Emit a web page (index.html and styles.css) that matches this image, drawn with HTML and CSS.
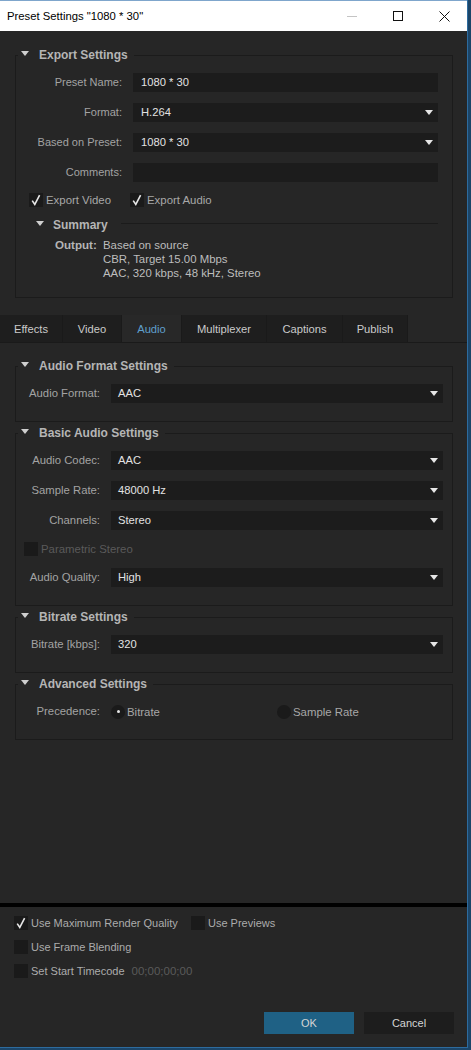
FILE: index.html
```html
<!DOCTYPE html>
<html>
<head>
<meta charset="utf-8">
<title>Preset Settings</title>
<link rel="stylesheet" href="styles.css">
</head>
<body>
<div class="window">
  <div class="titlebar">
    <span class="title">Preset Settings "1080 * 30"</span>
    <div class="wctl">
      <span class="wbtn"><svg width="10" height="10" viewBox="0 0 10 10"><line x1="0" y1="5.5" x2="10" y2="5.5" stroke="#c4c4c4" stroke-width="1"/></svg></span>
      <span class="wbtn"><svg width="10" height="10" viewBox="0 0 10 10"><rect x="0.5" y="0.5" width="9" height="9" fill="none" stroke="#111" stroke-width="1"/></svg></span>
      <span class="wbtn"><svg width="11" height="11" viewBox="0 0 11 11"><path d="M0.5 0.5 L10.5 10.5 M10.5 0.5 L0.5 10.5" stroke="#111" stroke-width="1"/></svg></span>
    </div>
  </div>

  <div class="main">
    <fieldset class="group export">
      <legend><span class="tri"></span>Export Settings</legend>
      <div class="form form-export">
        <span class="lbl">Preset Name:</span><div class="field">1080 * 30</div>
        <span class="lbl">Format:</span><div class="field drop">H.264</div>
        <span class="lbl">Based on Preset:</span><div class="field drop">1080 * 30</div>
        <span class="lbl">Comments:</span><div class="field"></div>
      </div>
      <div class="checks">
        <span class="chk chk-video"><span class="box on"><svg width="14" height="14" viewBox="0 0 14 14"><path d="M3.2 7.6 L5.8 11.4 L10.6 2.2" fill="none" stroke="#e6e6e6" stroke-width="1.6"/></svg></span>Export Video</span>
        <span class="chk"><span class="box on"><svg width="14" height="14" viewBox="0 0 14 14"><path d="M3.2 7.6 L5.8 11.4 L10.6 2.2" fill="none" stroke="#e6e6e6" stroke-width="1.6"/></svg></span>Export Audio</span>
      </div>
      <div class="summary-head"><span class="tri"></span><span class="sumtitle">Summary</span><span class="rule"></span></div>
      <div class="output">
        <span class="olabel">Output:</span>
        <div class="otext">Based on source<br>CBR, Target 15.00 Mbps<br>AAC, 320 kbps, 48 kHz, Stereo</div>
      </div>
    </fieldset>

    <div class="tabs">
      <span class="tab t-effects">Effects</span>
      <span class="tab t-video">Video</span>
      <span class="tab t-audio active">Audio</span>
      <span class="tab t-mux">Multiplexer</span>
      <span class="tab t-cap">Captions</span>
      <span class="tab t-pub">Publish</span>
    </div>

    <div class="panel">
      <fieldset class="group audio first">
        <legend><span class="tri"></span>Audio Format Settings</legend>
        <div class="form form-audio">
          <span class="lbl">Audio Format:</span><div class="field drop">AAC</div>
        </div>
      </fieldset>

      <fieldset class="group audio">
        <legend><span class="tri"></span>Basic Audio Settings</legend>
        <div class="form form-audio">
          <span class="lbl">Audio Codec:</span><div class="field drop">AAC</div>
          <span class="lbl">Sample Rate:</span><div class="field drop">48000 Hz</div>
          <span class="lbl">Channels:</span><div class="field drop">Stereo</div>
          <div class="span-row"><span class="chk disabled"><span class="box"></span>Parametric Stereo</span></div>
          <span class="lbl">Audio Quality:</span><div class="field drop">High</div>
        </div>
      </fieldset>

      <fieldset class="group audio">
        <legend><span class="tri"></span>Bitrate Settings</legend>
        <div class="form form-audio">
          <span class="lbl">Bitrate [kbps]:</span><div class="field drop">320</div>
        </div>
      </fieldset>

      <fieldset class="group audio">
        <legend><span class="tri"></span>Advanced Settings</legend>
        <div class="form form-audio">
          <span class="lbl">Precedence:</span>
          <div class="radios">
            <span class="radio r-first"><span class="dot on"></span>Bitrate</span>
            <span class="radio"><span class="dot"></span>Sample Rate</span>
          </div>
        </div>
      </fieldset>
    </div>
  </div>

  <div class="sep"></div>

  <div class="footer">
    <div class="frow">
      <span class="chk fitem-first"><span class="box on"><svg width="14" height="14" viewBox="0 0 14 14"><path d="M3.2 7.6 L5.8 11.4 L10.6 2.2" fill="none" stroke="#e6e6e6" stroke-width="1.6"/></svg></span>Use Maximum Render Quality</span>
      <span class="chk"><span class="box"></span>Use Previews</span>
    </div>
    <div class="frow">
      <span class="chk"><span class="box"></span>Use Frame Blending</span>
    </div>
    <div class="frow">
      <span class="chk"><span class="box"></span>Set Start Timecode</span>
      <span class="timecode">00;00;00;00</span>
    </div>
    <div class="buttons">
      <span class="btn ok">OK</span>
      <span class="btn cancel">Cancel</span>
    </div>
  </div>
</div>
</body>
</html>
```
FILE: styles.css
```css
* { box-sizing: border-box; }
html, body { margin: 0; padding: 0; }
body {
  width: 471px;
  height: 1050px;
  overflow: hidden;
  background: #1c4568;
  font-family: "Liberation Sans", Arial, sans-serif;
  font-size: 11px;
  color: #a9a9a9;
}
.window {
  width: 468px;
  height: 1048px;
  background: #262626;
  border-right: 1px solid #2d6b9e;
  border-bottom: 1px solid #2d6b9e;
  display: flex;
  flex-direction: column;
}

/* title bar */
.titlebar {
  height: 31px;
  background: #ffffff;
  border-top: 1px solid #7fa6cc;
  display: flex;
  align-items: center;
  flex-shrink: 0;
}
.title {
  padding-left: 7px;
  font-size: 11.3px;
  color: #000;
  flex: 1;
}
.wctl { display: flex; height: 100%; }
.wbtn {
  width: 46px;
  height: 100%;
  display: flex;
  align-items: center;
  justify-content: center;
}
.wbtn svg { display: block; }

/* main */
.main {
  flex: 1;
  display: flex;
  flex-direction: column;
}

.group {
  margin: 0 0 0 15px;
  width: 438px;
  padding: 0;
  border: 1px solid #1b1b1b;
  min-inline-size: 0;
}
.group legend {
  margin-left: 2px;
  padding: 0 6px 0 3px;
  height: 16px;
  line-height: 16px;
  font-size: 12px;
  font-weight: bold;
  color: #b5b5b5;
  display: flex;
  align-items: center;
}
.tri {
  display: inline-block;
  width: 0;
  height: 0;
  border-left: 4px solid transparent;
  border-right: 4px solid transparent;
  border-top: 5px solid #cfcfcf;
  margin-right: 10px;
  margin-top: -3px;
}

.export { margin-top: 16px; }
.form {
  display: grid;
  column-gap: 11px;
  row-gap: 11px;
  padding-top: 10px;
}
.form-export { grid-template-columns: 106px 305px; }
.form-audio { grid-template-columns: 84px 332px; padding-bottom: 18px; }

.lbl {
  text-align: right;
  white-space: nowrap;
  line-height: 19px;
  font-size: 11px;
  color: #a3a3a3;
}
.form-audio .lbl { font-size: 11.3px; }
.field {
  height: 19px;
  line-height: 19px;
  background: #1c1c1c;
  color: #e2e2e2;
  padding-left: 8px;
  font-size: 11.2px;
  position: relative;
}
.form-audio .field { padding-left: 7px; }
.drop::after {
  content: "";
  position: absolute;
  right: 5px;
  top: 7px;
  border-left: 4px solid transparent;
  border-right: 4px solid transparent;
  border-top: 5px solid #e6e6e6;
}

.checks {
  margin-top: 11px;
  padding-left: 13px;
  display: flex;
  height: 14px;
  align-items: center;
}
.chk {
  display: inline-flex;
  align-items: center;
  height: 14px;
  white-space: nowrap;
  color: #a8a8a8;
}
.checks .chk { font-size: 11.4px; }
.chk-video { width: 101px; }
.box {
  width: 14px;
  height: 14px;
  background: #1a1a1a;
  margin-right: 3px;
  flex-shrink: 0;
}
.box svg { display: block; }

.summary-head {
  margin-top: 10px;
  height: 15px;
  padding-left: 20px;
  padding-right: 14px;
  display: flex;
  align-items: center;
}
.summary-head .tri { margin-right: 9px; }
.sumtitle {
  font-size: 12px;
  font-weight: bold;
  color: #b5b5b5;
}
.rule {
  flex: 1;
  border-top: 1px solid #1b1b1b;
  margin-left: 13px;
  margin-top: -3px;
}
.output {
  margin-top: 6px;
  padding-left: 39px;
  padding-bottom: 17px;
  display: flex;
  line-height: 14px;
  font-size: 11.4px;
}
.olabel {
  width: 48px;
  font-size: 11.6px;
  font-weight: bold;
  color: #b5b5b5;
}
.otext { color: #bdbdbd; }

/* tabs */
.tabs {
  margin-top: 17px;
  display: flex;
  height: 28px;
  border-bottom: 1px solid #1a1a1a;
}
.tab {
  height: 27px;
  line-height: 29px;
  text-align: center;
  background: #1e1e1e;
  border-right: 1px solid #1a1a1a;
  color: #cacaca;
  font-size: 11.2px;
}
.tab.active { background: #282828; color: #5f9fcc; }
.t-effects { width: 63px; }
.t-video { width: 59px; }
.t-audio { width: 60px; }
.t-mux { width: 85px; }
.t-cap { width: 76px; }
.t-pub { width: 65px; }

.panel {
  display: flex;
  flex-direction: column;
}
.audio { margin-top: 3px; }
.audio.first { margin-top: 15px; }

.span-row {
  grid-column: 1 / 3;
  height: 16px;
  display: flex;
  align-items: center;
  padding-left: 8px;
}
.chk.disabled { color: #5a5a5a; font-size: 11.4px; }

.radios { display: flex; align-items: center; height: 19px; }
.radio { display: inline-flex; align-items: center; color: #a8a8a8; font-size: 11.4px; }
.r-first { width: 166px; }
.dot {
  width: 14px;
  height: 14px;
  border-radius: 50%;
  background: #1a1a1a;
  margin-right: 2px;
  display: flex;
  align-items: center;
  justify-content: center;
}
.dot.on::after {
  content: "";
  width: 3px;
  height: 3px;
  border-radius: 50%;
  background: #e6e6e6;
}

.sep { height: 4px; background: #000; flex-shrink: 0; }

/* footer */
.footer {
  height: 140px;
  flex-shrink: 0;
  padding: 9px 13px 13px 14px;
  display: flex;
  flex-direction: column;
}
.frow {
  height: 14px;
  margin-bottom: 10px;
  display: flex;
  align-items: center;
}
.chk.fitem-first { width: 177px; }
.frow .chk { color: #acacac; }
.timecode { margin-left: 7px; color: #5a5a5a; font-size: 11.5px; }
.buttons {
  margin-top: auto;
  display: flex;
  justify-content: flex-end;
  gap: 10px;
}
.btn {
  width: 90px;
  height: 22px;
  line-height: 22px;
  text-align: center;
  color: #d4d4d4;
  font-size: 11px;
}
.ok { background: #1f6185; }
.cancel { background: #1d1d1d; }
```
